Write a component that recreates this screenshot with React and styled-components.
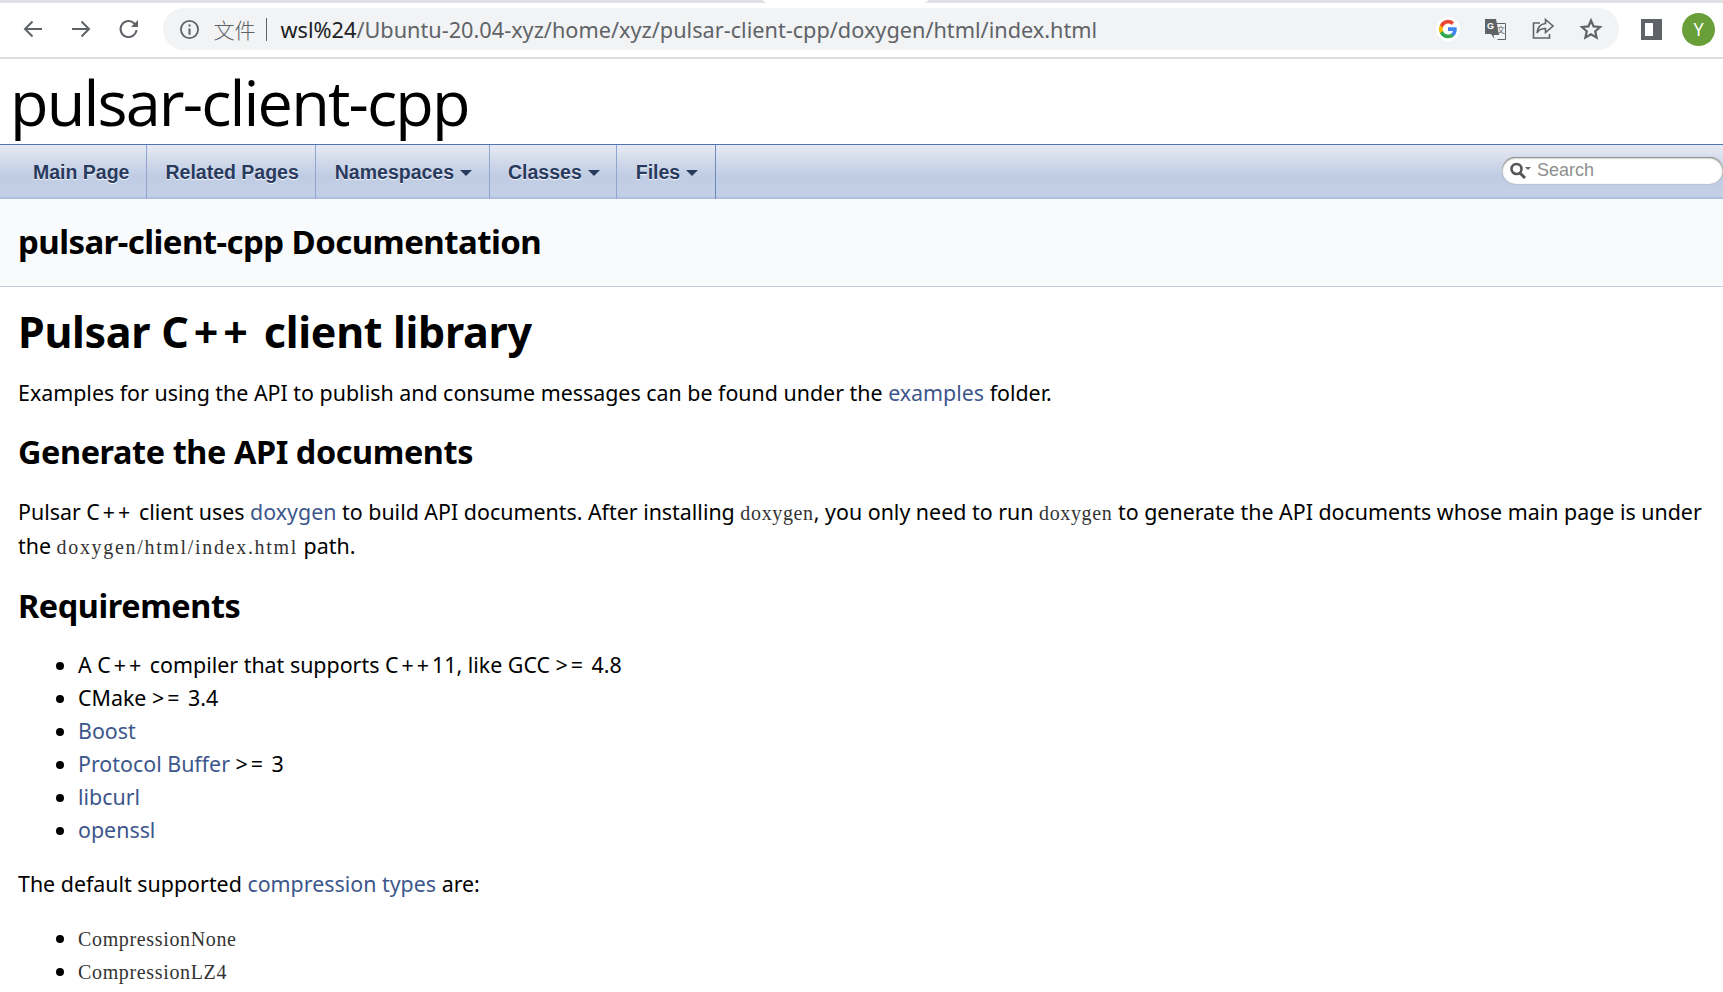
import React from "react";
import styled, { createGlobalStyle } from "styled-components";

const Global = createGlobalStyle`
  html, body { margin: 0; padding: 0; background: #fff; overflow: hidden; }
  body { font-family: "Noto Sans", "Noto Sans CJK SC", sans-serif; color: #000; }
  * { box-sizing: border-box; }
`;
const Page = styled.div`width: 1723px; height: 992px; overflow: hidden;`;
const TabStrip = styled.div`height: 3px; background: #dee1e6; display: flex; padding-left: 763px;`;
const ActiveTab = styled.div`width: 165px; background: #fff; border-radius: 0 0 5px 5px / 0 0 3px 3px;`;
const Toolbar = styled.div`height: 56px; display: flex; align-items: center; padding: 0 8px 2px 21px; border-bottom: 2px solid #dedfe1; background: #fff;`;
const NavBtn = styled.div`width: 48px; height: 24px; display: flex; align-items: center; color: #5f6368;`;
const Omni = styled.div`width: 1457px; margin-left: -2.4px; height: 42px; border-radius: 21px; background: #f1f3f4; display: flex; align-items: center; padding: 0 4px 0 16px;`;
const Chip = styled.span`font-size: 21px; color: #5f6368; margin-left: 14px; font-family: "Noto Sans CJK SC", sans-serif; font-weight: 300;`;
const Divider = styled.span`width: 1px; height: 23px; background: #5f6368; margin: 0 14px 0 10px;`;
const Url = styled.div`flex: 1; font-size: 21.7px; color: #5f6368; white-space: nowrap; b { color: #202124; font-weight: 400; }`;
const OmniIcon = styled.div`width: 48px; display: flex; justify-content: center; color: #5f6368;`;
const GoogleBadge = styled.div`width: 24px; height: 24px; border-radius: 50%; background: #fff; display: flex; align-items: center; justify-content: center; margin-left: 2px;`;
const SideIcon = styled.div`margin-left: 22px; width: 21px; height: 21px; border: 4px solid #5f6368; border-right-width: 9px; background: #fff; flex: none;`;
const Avatar = styled.div`margin-left: 20px; width: 33px; height: 33px; flex: none; border-radius: 50%; background: #689f38; color: #fff; font-size: 18px; display: flex; align-items: center; justify-content: center;`;
const ProjectTitle = styled.div`height: 85px; padding-left: 10px; font-size: 63px; line-height: 85px; letter-spacing: -1.85px; font-family: "Open Sans", sans-serif;`;
const Nav = styled.nav`height: 55px; border-top: 1px solid #5373b4; display: flex; align-items: stretch; justify-content: space-between; background: linear-gradient(to bottom, #e6eaf3 0%, #d3dbeb 28%, #bfcce3 58%, #c4d0e6 94%, #a9b9d9 100%); font-family: "Liberation Sans", sans-serif;`;
const Tabs = styled.div`display: flex;`;
const Tab = styled.div`display: flex; align-items: center; padding: 1px 16.5px 0 ${p => (p.$first ? "33px" : "18.5px")}; border-right: 1px solid ${p => (p.$last ? "#6f88bd" : "#90a5cf")}; font-size: 19.5px; font-weight: 700; color: #283a5d; text-shadow: 0 1px 1px rgba(255,255,255,.9);`;
const Caret = styled.span`margin-left: 6px; border-left: 6px solid transparent; border-right: 6px solid transparent; border-top: 6px solid #283a5d; margin-top: 1px;`;
const SearchBox = styled.div`align-self: flex-start; margin-top: 12px; width: 221px; height: 27px; border-radius: 14px; background: #fff; box-shadow: inset 0 1px 2px rgba(0,0,0,.55), 0 0 1px rgba(0,0,0,.4); display: flex; align-items: center; padding-left: 7px; color: #8f8f8f; font-size: 18px;`;
const SearchIcon = styled.svg`width: 22px; height: 20px; margin-right: 6px; flex: none;`;
const Header = styled.div`height: 88px; background: #f9fafc; border-bottom: 1px solid #c4cfe5; padding: 0 0 2px 18px; display: flex; align-items: center; font-size: 33px; font-weight: 700; letter-spacing: -0.57px;`;
const Content = styled.main`padding: 0 18px; font-size: 21.4px;`;
const H1 = styled.h1`margin: 15px 0 0; font-size: 43px; line-height: 60px; font-weight: 700; letter-spacing: -0.3px;`;
const H2 = styled.h2`margin: ${p => p.$m || "0"}; font-size: 32.4px; line-height: 46px; font-weight: 700; letter-spacing: -0.4px;`;
const P = styled.p`margin: ${p => p.$m || "0"}; line-height: 34px; white-space: nowrap;`;
const A = styled.span`color: #3d578c;`;
const Sym = styled.span`letter-spacing: ${p => p.$ls || "3px"};`;
const Code = styled.code`font-family: "Liberation Serif", serif; font-size: 20px; line-height: 1; letter-spacing: ${p => p.$ls || "0.65px"}; color: #333;`;
const List = styled.ul`margin: ${p => p.$m || "0"}; padding: 0 0 0 60px;`;
const Item = styled.li`line-height: 33px; height: 33px;`;

const ArrowLeft = () => (<svg width="24" height="24" viewBox="0 0 24 24" fill="none" stroke="currentColor" strokeWidth="2"><path d="M21 12H4M11.5 4.5 4 12l7.5 7.5" /></svg>);
const ArrowRight = () => (<svg width="24" height="24" viewBox="0 0 24 24" fill="none" stroke="currentColor" strokeWidth="2"><path d="M3 12h17M12.5 4.5 20 12l-7.5 7.5" /></svg>);
const Reload = () => (<svg width="24" height="24" viewBox="0 0 24 24" fill="none" stroke="currentColor" strokeWidth="2"><path d="M19.5 13a8 8 0 1 1-2.2-6.5L20 9" /><path d="M21 3v7h-7" fill="currentColor" stroke="none" /></svg>);
const Info = () => (<svg width="21" height="21" viewBox="0 0 20 20" fill="none" stroke="#5f6368"><circle cx="10" cy="10" r="8.2" strokeWidth="1.7" /><path d="M10 9v6M10 5.2v2" strokeWidth="2" /></svg>);
const Google = () => (<svg width="20" height="20" viewBox="0 0 48 48"><path fill="#4285F4" d="M45 24.500c0-1.600-.1-3.100-.4-4.500H24v8.500h11.800c-.5 2.800-2 5-4.400 6.600v5.500h7.100C42.700 36.800 45 31.200 45 24.500z"/><path fill="#34A853" d="M24 46c5.900 0 10.900-2 14.500-5.400l-7.100-5.500c-2 1.300-4.500 2.100-7.400 2.100-5.700 0-10.500-3.800-12.200-9H4.500v5.700C8.100 41 15.500 46 24 46z"/><path fill="#FBBC05" d="M11.800 28.700c-.9-2.700-.9-5.600 0-8.300v-5.700H4.500c-3 6-3 13.200 0 19.200z"/><path fill="#EA4335" d="M24 11c3.200 0 6.100 1.100 8.300 3.300l6.300-6.300C34.900 4.400 29.900 2 24 2 15.500 2 8.100 7 4.500 14.700l7.300 5.700c1.700-5.300 6.500-9.400 12.200-9.400z"/></svg>);
const Translate = () => (<svg width="22" height="22" viewBox="0 0 22 22"><path fill="none" stroke="#5f6368" d="M10 5.500h11.500v16h-8" /><path fill="#5f6368" d="M1 1h11l3 16H9.500l1 4L7 16H1z" /><text x="3" y="11" fontSize="9" fontWeight="700" fill="#fff" fontFamily="Liberation Sans">G</text><text x="13" y="15" fontSize="8" fill="#5f6368" fontFamily="Noto Sans CJK SC">文</text></svg>);
const Share = () => (<svg width="24" height="24" viewBox="0 0 24 24" fill="none" stroke="#5f6368" strokeWidth="1.6"><path d="M9 6H2.500v15h16v-4" /><path d="M14.500 2.500 22 9l-7.500 6.500V11.500C10 11.500 7.500 13 6 16c.5-5 3.500-9 8.500-9.500z" /></svg>);
const Star = () => (<svg width="24" height="24" viewBox="0 0 24 24" fill="none" stroke="#5f6368" strokeWidth="2.200"><path d="M12 3.500l2.600 5.900 6.400.6-4.800 4.300 1.400 6.300L12 17.300l-5.600 3.300 1.400-6.300L3 10l6.400-.6z" /></svg>);

export default function App() {
  return (
    <Page>
      <Global />
      <TabStrip><ActiveTab /></TabStrip>
      <Toolbar>
        <NavBtn><ArrowLeft /></NavBtn>
        <NavBtn><ArrowRight /></NavBtn>
        <NavBtn><Reload /></NavBtn>
        <Omni>
          <Info />
          <Chip>文件</Chip>
          <Divider />
          <Url><b>wsl%24</b>/Ubuntu-20.04-xyz/home/xyz/pulsar-client-cpp/doxygen/html/index.html</Url>
          <OmniIcon><GoogleBadge><Google /></GoogleBadge></OmniIcon>
          <OmniIcon><Translate /></OmniIcon>
          <OmniIcon><Share /></OmniIcon>
          <OmniIcon><Star /></OmniIcon>
        </Omni>
        <SideIcon />
        <Avatar>Y</Avatar>
      </Toolbar>
      <ProjectTitle>pulsar-client-cpp</ProjectTitle>
      <Nav>
        <Tabs>
          <Tab $first>Main Page</Tab>
          <Tab>Related Pages</Tab>
          <Tab>Namespaces<Caret /></Tab>
          <Tab>Classes<Caret /></Tab>
          <Tab $last>Files<Caret /></Tab>
        </Tabs>
        <SearchBox>
          <SearchIcon viewBox="0 0 22 20">
            <circle cx="7.500" cy="8" r="5" fill="none" stroke="#555" strokeWidth="2.600" />
            <path d="M11 12l5 5" stroke="#555" strokeWidth="3" />
            <path d="M16 6h6l-3 3z" fill="#666" />
          </SearchIcon>
          Search
        </SearchBox>
      </Nav>
      <Header>pulsar-client-cpp Documentation</Header>
      <Content>
        <H1>Pulsar <Sym $ls="5px">C++</Sym> client library</H1>
        <P $m="14px 0 0">Examples for using the API to publish and consume messages can be found under the <A>examples</A> folder.</P>
        <H2 $m="18px 0 0">Generate the API documents</H2>
        <P $m="21px 0 0">Pulsar <Sym>C++</Sym> client uses <A>doxygen</A> to build API documents. After installing <Code>doxygen</Code>, you only need to run <Code>doxygen</Code> to generate the API documents whose main page is under</P>
        <P>the <Code $ls="1.68px">doxygen/html/index.html</Code> path.</P>
        <H2 $m="19px 0 0">Requirements</H2>
        <List $m="20px 0 0">
          <Item>A <Sym>C++</Sym> compiler that supports <Sym>C++</Sym>11, like GCC <Sym>&gt;=</Sym> 4.8</Item>
          <Item>CMake <Sym>&gt;=</Sym> 3.4</Item>
          <Item><A>Boost</A></Item>
          <Item><A>Protocol Buffer</A> <Sym>&gt;=</Sym> 3</Item>
          <Item><A>libcurl</A></Item>
          <Item><A>openssl</A></Item>
        </List>
        <P $m="21px 0 0">The default supported <A>compression types</A> are:</P>
        <List $m="20px 0 0">
          <Item><Code>CompressionNone</Code></Item>
          <Item><Code>CompressionLZ4</Code></Item>
        </List>
      </Content>
    </Page>
  );
}
